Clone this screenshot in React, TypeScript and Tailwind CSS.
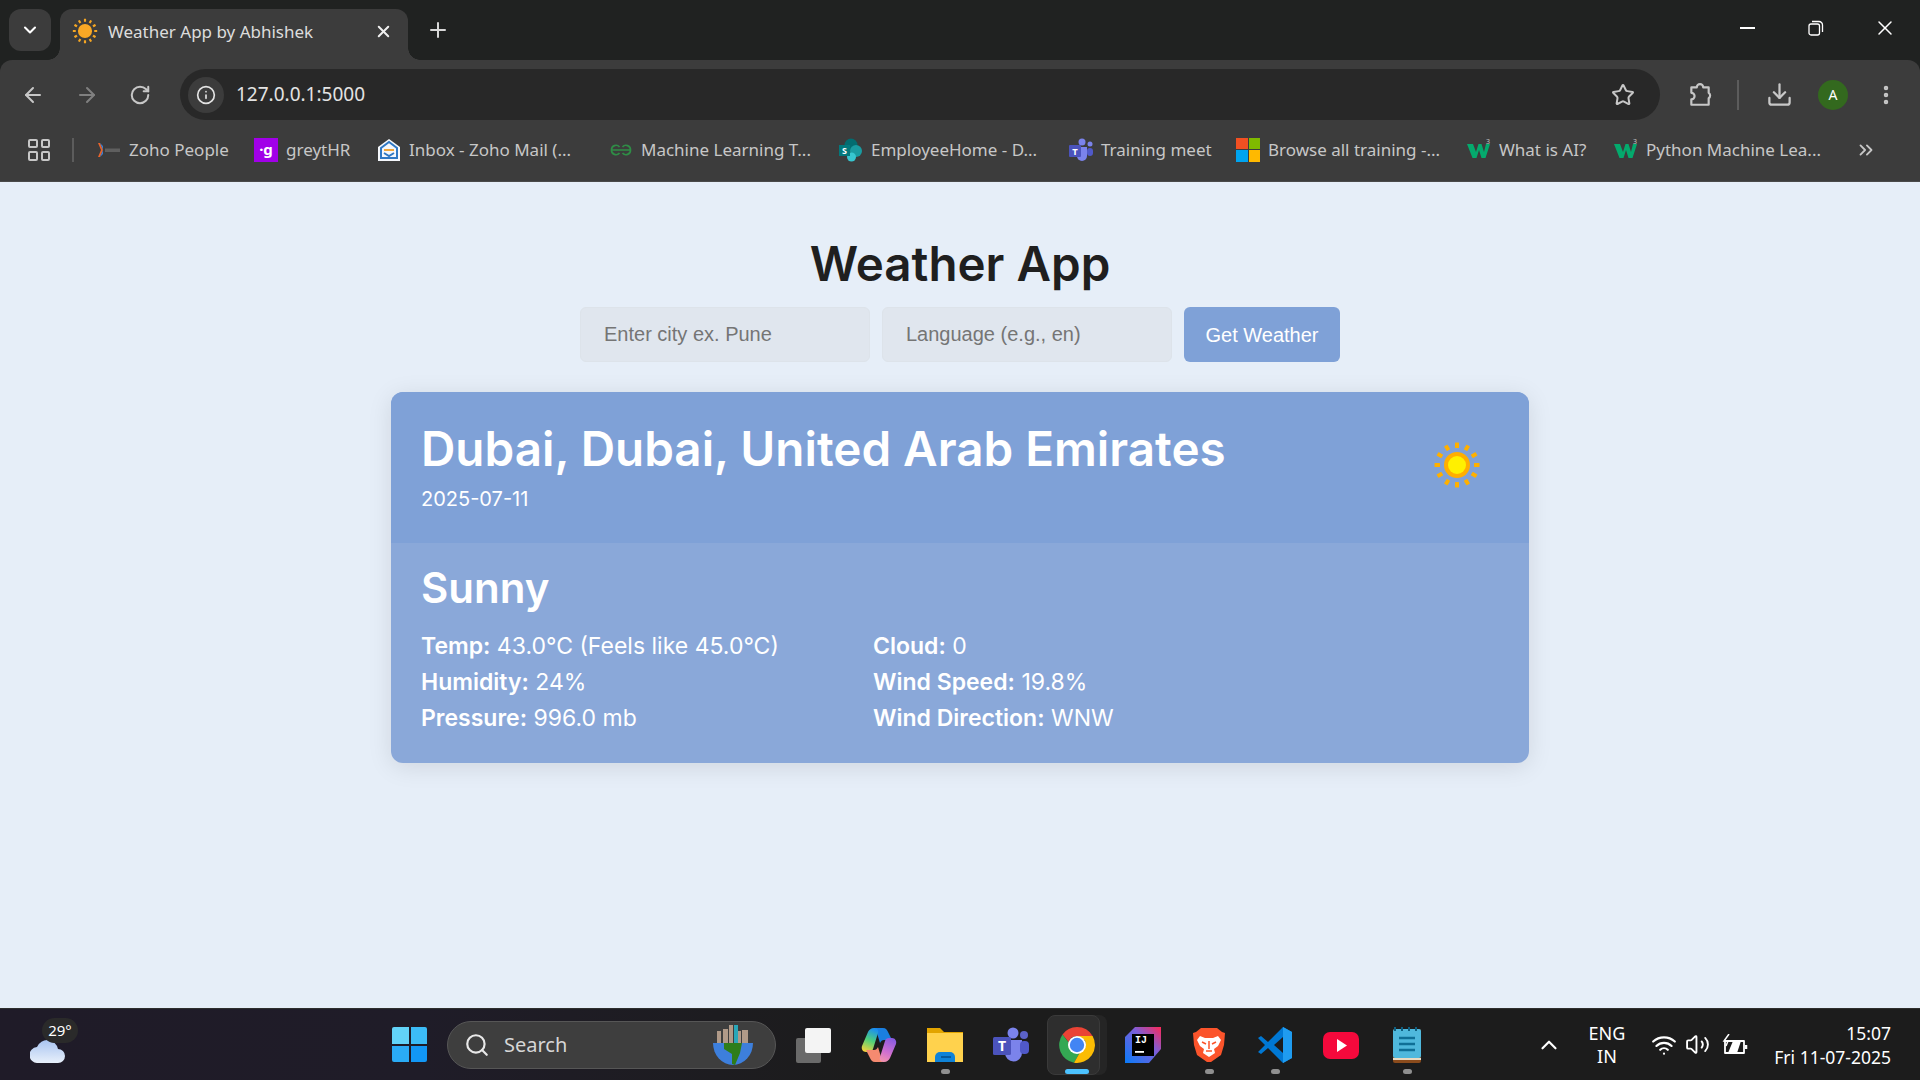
import { ArrowLeft, ArrowRight, ChevronDown, ChevronUp, ChevronsRight, Download, EllipsisVertical, Info, Plus, RotateCw, Search, Star, Volume2, Wifi, X } from "lucide-react";

const SunIcon = ({ className, ray = "#ffb000", disc = "#ffae00", core = "#fff000" }: { className: string; ray?: string; disc?: string; core?: string }) => (
  <svg viewBox="0 0 48 48" className={className}>
    {[0, 30, 60, 90, 120, 150, 180, 210, 240, 270, 300, 330].map((a) => (
      <rect key={a} x="22" y="1.500" width="4" height="5.500" rx="0.500" fill={ray} transform={`rotate(${a} 24 24)`} />
    ))}
    <circle cx="24" cy="24" r="13" fill={disc} />
    <circle cx="24" cy="24" r="9" fill={core} />
  </svg>
);

const W3Icon = () => (
  <svg viewBox="0 0 24 24" className="h-6 w-6">
    <path d="M0 6h6l3 8 2.500-8h3l2.500 8 2-8h4l-4.500 14h-4L12 12l-2.500 8h-4z" fill="#04aa6d" />
    <text x="19" y="6" fontSize="7" fill="#c7c7c7" fontFamily="Noto Sans, sans-serif">3</text>
  </svg>
);

const bookmarks = [
  {
    label: "Zoho People",
    w: "w-[157px]",
    icon: (
      <svg viewBox="0 0 24 24" className="h-6 w-6">
        <path d="M1 5l3 7-3 7h2l3-7-3-7z" fill="#e8642c" />
        <path d="M3 5l3 7-3 7 3-3V8z" fill="#3f7fd0" />
        <rect x="8" y="10.500" width="15" height="3.500" fill="#5f5f5f" />
      </svg>
    ),
  },
  {
    label: "greytHR",
    w: "w-[123px]",
    icon: (
      <div className="flex h-6 w-6 items-center justify-center bg-[#a100e8] text-[15px] leading-none font-bold text-white">·g</div>
    ),
  },
  {
    label: "Inbox - Zoho Mail (...",
    w: "w-[232px]",
    icon: (
      <svg viewBox="0 0 24 24" className="h-6 w-6">
        <path d="M12 1l11 8v14H1V9z" fill="#f4f7fb" />
        <path d="M4 10l8-6 8 6v10H4z" fill="none" stroke="#2f78c4" strokeWidth="2" />
        <path d="M7 11h10v2H7z" fill="#f0a63a" />
        <path d="M7 15l5 3 5-3" fill="none" stroke="#2f78c4" strokeWidth="2" />
      </svg>
    ),
  },
  {
    label: "Machine Learning T...",
    w: "w-[230px]",
    icon: (
      <svg viewBox="0 0 24 24" className="h-6 w-6" fill="none" stroke="#2f8d46" strokeWidth="1.700">
        <path d="M12 12H2.500a4.500 4.500 0 0 1 8-3M12 12h9.500a4.500 4.500 0 0 0-8-3M2.500 12a4.500 4.500 0 0 0 8 3M21.500 12a4.500 4.500 0 0 1-8 3" />
      </svg>
    ),
  },
  {
    label: "EmployeeHome - D...",
    w: "w-[230px]",
    icon: (
      <svg viewBox="0 0 24 24" className="h-6 w-6">
        <circle cx="12" cy="7" r="6.500" fill="#036c70" />
        <circle cx="17" cy="13" r="6" fill="#1a9ba1" />
        <circle cx="12.500" cy="19" r="4.500" fill="#37c6d0" />
        <rect x="0" y="7" width="11" height="11" fill="#03787c" />
        <text x="5.500" y="16" fontSize="9" fontWeight="700" textAnchor="middle" fill="#fff" fontFamily="Noto Sans, sans-serif">S</text>
      </svg>
    ),
  },
  {
    label: "Training meet",
    w: "w-[167px]",
    icon: (
      <svg viewBox="0 0 24 24" className="h-6 w-6">
        <circle cx="21" cy="6" r="2.500" fill="#7b83eb" />
        <circle cx="13" cy="4" r="3.500" fill="#7b83eb" />
        <path d="M8 9h10v9a5 5 0 0 1-10 0z" fill="#7b83eb" />
        <rect x="18" y="10" width="6" height="8" rx="3" fill="#5059c9" />
        <rect x="0" y="7" width="12" height="12" rx="1" fill="#4b53bc" />
        <text x="6" y="16.500" fontSize="9.500" fontWeight="700" textAnchor="middle" fill="#fff" fontFamily="Noto Sans, sans-serif">T</text>
      </svg>
    ),
  },
  {
    label: "Browse all training -...",
    w: "w-[231px]",
    icon: (
      <div className="grid h-6 w-6 grid-cols-2 gap-px">
        <div className="bg-[#f25022]" />
        <div className="bg-[#7fba00]" />
        <div className="bg-[#00a4ef]" />
        <div className="bg-[#ffb900]" />
      </div>
    ),
  },
  { label: "What is AI?", w: "w-[147px]", icon: <W3Icon /> },
  { label: "Python Machine Lea...", w: "w-[216px]", icon: <W3Icon /> },
];

const BrowserChrome = () => (
  <div className="font-['Noto_Sans',sans-serif]">
    {/* tab strip */}
    <div className="flex h-[60px] items-end bg-[#202221] pl-[9px] text-white">
      <div className="mt-[9px] flex h-[42px] w-[42px] items-center justify-center self-start rounded-xl bg-[#3c3c3c]">
        <ChevronDown className="h-5 w-5" strokeWidth={2.500} />
      </div>
      <div className="relative ml-[9px] flex h-[51px] w-[348px] items-center rounded-t-xl bg-[#3c3c3c] pb-[7px] pl-[12px]">
        <span className="absolute bottom-0 -left-3 h-3 w-3 bg-[radial-gradient(circle_at_0_0,transparent_11.500px,#3c3c3c_12px)]" />
        <span className="absolute -right-3 bottom-0 h-3 w-3 bg-[radial-gradient(circle_at_100%_0,transparent_11.500px,#3c3c3c_12px)]" />
        <SunIcon className="h-[26px] w-[26px]" ray="#f5a623" disc="#f9a825" core="#f9a825" />
        <span className="ml-[10px] w-[266px] text-[17px] leading-none text-[#dcdcdc]">Weather App by Abhishek</span>
        <X className="h-[19px] w-[19px] text-[#f0f0f0]" strokeWidth={2.500} />
      </div>
      <Plus className="mb-[18px] ml-[18px] h-[24px] w-[24px] text-[#d8d8d8]" strokeWidth={2} />
      <div className="mb-[20px] ml-auto flex items-center pr-[23px]">
        <div className="h-[2px] w-[15px] bg-white" />
        <svg viewBox="0 0 16 16" className="ml-[53px] h-[16px] w-[16px]" fill="none" stroke="#fff" strokeWidth="1.300">
          <rect x="1" y="4" width="10.500" height="11" rx="2" />
          <path d="M4 1.500h7a3.500 3.500 0 0 1 3.500 3.500v7" />
        </svg>
        <X className="ml-[49px] h-[24px] w-[24px]" strokeWidth={1.500} />
      </div>
    </div>

    {/* toolbar */}
    <div className="bg-[#202221]">
      <div className="rounded-t-xl bg-[#3c3c3c]">
        <div className="flex h-[60px] items-start pt-[9px] text-[#c7c7c7]">
          <div className="flex h-[51px] w-[180px] items-center pl-[21px]">
            <ArrowLeft className="h-6 w-6" strokeWidth={2} />
            <ArrowRight className="ml-[30px] h-6 w-6 text-[#808080]" strokeWidth={2} />
            <RotateCw className="ml-[30px] h-[22px] w-[22px]" strokeWidth={2.200} />
          </div>
          <div className="flex h-[51px] w-[1480px] items-center rounded-full bg-[#282828] pl-[8px]">
            <div className="flex h-[36px] w-[36px] items-center justify-center rounded-full bg-[#3c3c3c]">
              <Info className="h-[20px] w-[20px] text-[#e3e3e3]" strokeWidth={2} />
            </div>
            <span className="ml-[12px] text-[19px] leading-none text-[#e3e3e3]">127.0.0.1:5000</span>
            <Star className="mr-[25px] ml-auto h-[24px] w-[24px]" strokeWidth={2} />
          </div>
          <div className="flex h-[51px] items-center">
            <svg viewBox="0 0 24 24" className="ml-[27px] h-[26px] w-[26px]" fill="none" stroke="#c7c7c7" strokeWidth="2">
              <path d="M4 5h5a3 3 0 0 1 6 0h5v5a3 3 0 0 1 0 5v6H4v-5a3 3 0 0 0 0-6z" strokeLinejoin="round" />
            </svg>
            <div className="ml-[24px] h-[30px] w-[2px] bg-[#5c5c5c]" />
            <Download className="ml-[27px] h-[27px] w-[27px]" strokeWidth={2} />
            <div className="ml-[25px] flex h-[30px] w-[30px] items-center justify-center rounded-full bg-[#33691e] text-[14px] text-white">A</div>
            <EllipsisVertical className="ml-[26px] h-[24px] w-[24px]" strokeWidth={2.500} />
          </div>
        </div>

        {/* bookmarks */}
        <div className="flex h-[62px] items-center border-b border-[#4a4a4a] pb-[2px] text-[17px] leading-none text-[#c7c7c7]">
          <div className="ml-[28px] grid h-[22px] w-[22px] grid-cols-2 gap-[3px]">
            <div className="rounded-[2px] border-2 border-[#c7c7c7]" />
            <div className="rounded-[2px] border-2 border-[#c7c7c7]" />
            <div className="rounded-[2px] border-2 border-[#c7c7c7]" />
            <div className="rounded-[2px] border-2 border-[#c7c7c7]" />
          </div>
          <div className="mr-[23px] ml-[22px] h-[24px] w-[2px] bg-[#5c5c5c]" />
          {bookmarks.map((b) => (
            <div key={b.label} className={`flex shrink-0 items-center gap-[8px] ${b.w}`}>
              {b.icon}
              <span className="whitespace-nowrap">{b.label}</span>
            </div>
          ))}
          <ChevronsRight className="ml-[25px] h-[22px] w-[22px]" strokeWidth={2} />
        </div>
      </div>
    </div>
  </div>
);

const WeatherPage = () => (
  <main className="flex flex-1 flex-col items-center bg-[#e6eef8] pt-[49px] font-['Inter',sans-serif]">
    <h1 className="text-[47.500px] leading-[66px] font-semibold text-[#1f1f1f]">Weather App</h1>
    <form className="mt-[10px] flex gap-[12px] font-['Liberation_Sans',sans-serif]">
      <input
        placeholder="Enter city ex. Pune"
        className="h-[55px] w-[290px] rounded-md border border-[#dde3ea] bg-[#e0e6ee] px-[23px] text-[20px] placeholder:text-[#757575]"
      />
      <input
        placeholder="Language (e.g., en)"
        className="h-[55px] w-[290px] rounded-md border border-[#dde3ea] bg-[#e0e6ee] px-[23px] text-[20px] placeholder:text-[#757575]"
      />
      <button type="button" className="h-[55px] w-[156px] rounded-md bg-[#7fa1d7] text-[20px] text-white">
        Get Weather
      </button>
    </form>

    <section className="mt-[30px] w-[1138px] overflow-hidden rounded-xl bg-[#8aa8d9] text-white shadow-[0_4px_24px_rgba(0,0,0,0.1)]">
      <div className="flex items-center justify-between bg-[#7fa1d7] pt-[29px] pr-[48px] pb-[30px] pl-[30px]">
        <div>
          <h2 className="text-[47.600px] leading-[56px] font-semibold">Dubai, Dubai, United Arab Emirates</h2>
          <p className="mt-[9px] text-[20px] leading-[27px]">2025-07-11</p>
        </div>
        <SunIcon className="mb-[4px] h-[48px] w-[48px]" />
      </div>
      <div className="pt-[21px] pr-[30px] pb-[27px] pl-[30px]">
        <h3 className="text-[42px] leading-[48px] font-semibold">Sunny</h3>
        <div className="mt-[16px] grid grid-cols-[452px_1fr] text-[23px] leading-[36px]">
          <p><b className="font-semibold">Temp:</b> 43.0°C (Feels like 45.0°C)</p>
          <p><b className="font-semibold">Cloud:</b> 0</p>
          <p><b className="font-semibold">Humidity:</b> 24%</p>
          <p><b className="font-semibold">Wind Speed:</b> 19.8%</p>
          <p><b className="font-semibold">Pressure:</b> 996.0 mb</p>
          <p><b className="font-semibold">Wind Direction:</b> WNW</p>
        </div>
      </div>
    </section>
  </main>
);

const apps = [
  {
    name: "taskview",
    icon: (
      <svg viewBox="0 0 36 36" className="h-9 w-9">
        <rect x="1" y="11" width="25" height="25" rx="2" fill="#6a6a6a" />
        <rect x="10" y="1" width="26" height="25" rx="2" fill="#f4f4f4" />
      </svg>
    ),
  },
  {
    name: "copilot",
    icon: (
      <svg viewBox="0 0 36 36" className="h-9 w-9">
        <defs>
          <linearGradient id="cp1" x1="0.600" y1="0" x2="0.300" y2="1">
            <stop offset="0" stopColor="#1b8ff0" />
            <stop offset="0.5" stopColor="#4fd07a" />
            <stop offset="1" stopColor="#f2d23c" />
          </linearGradient>
          <linearGradient id="cp2" x1="0.400" y1="1" x2="0.700" y2="0">
            <stop offset="0" stopColor="#8a5be0" />
            <stop offset="0.6" stopColor="#d070d0" />
            <stop offset="1" stopColor="#f090b0" />
          </linearGradient>
        </defs>
        <path d="M13 1h9c3 0 4 2 5 4l4 8h-8c-2 0-3 1-4 3l-3-10c0-3-1-5-3-5z" fill="#1a7fe0" />
        <path d="M13 1c3 0 5 2 4 5L12 22c-.5 2-2 3-4 3H5c-3 0-5-3-4-6L7 5c1-2 3-4 6-4z" fill="url(#cp1)" />
        <path d="M13 1h9c3 0 4 2 5 4l4 8h-8c-2 0-3 1-4 3l-3-10c0-3-1-5-3-5z" fill="#f58a70" transform="rotate(180 18 18)" />
        <path d="M13 1c3 0 5 2 4 5L12 22c-.5 2-2 3-4 3H5c-3 0-5-3-4-6L7 5c1-2 3-4 6-4z" fill="url(#cp2)" transform="rotate(180 18 18)" />
      </svg>
    ),
    dot: false,
  },
  {
    name: "explorer",
    icon: (
      <svg viewBox="0 0 36 36" className="h-9 w-9">
        <path d="M0 1h13l4 4h19v30H0z" fill="#e2a400" />
        <path d="M0 6h36v29H0z" fill="#ffd24d" />
        <path d="M11 30a5 5 0 0 1 5-5h10a5 5 0 0 1 5 5v5H11z" fill="#0f83d8" transform="translate(-3)" />
        <rect x="14" y="29" width="10" height="2" fill="#075a9c" />
      </svg>
    ),
    dot: true,
  },
  {
    name: "teams",
    icon: (
      <svg viewBox="0 0 36 36" className="h-9 w-9">
        <circle cx="31" cy="8" r="4" fill="#5b62c8" />
        <circle cx="20" cy="6" r="5.500" fill="#7b83eb" />
        <path d="M12 13h17v13a8.500 8.500 0 0 1-17 0z" fill="#7b83eb" />
        <rect x="27" y="14" width="9" height="13" rx="4" fill="#5059c9" />
        <rect x="0" y="10" width="18" height="18" rx="1.500" fill="#4b53bc" />
        <text x="9" y="24" fontSize="14" fontWeight="700" textAnchor="middle" fill="#fff" fontFamily="Noto Sans, sans-serif">T</text>
      </svg>
    ),
  },
  {
    name: "chrome",
    active: true,
    icon: (
      <svg viewBox="0 0 36 36" className="relative h-9 w-9">
        <path d="M18 0a18 18 0 0 1 15.600 9H18a9 9 0 0 0-8.500 6L3.500 7.500A18 18 0 0 1 18 0z" fill="#ea4335" />
        <path d="M3.500 7.500A18 18 0 0 0 15 35.700l6-10.500a9 9 0 0 1-11.500-10z" fill="#34a853" />
        <path d="M33.600 9A18 18 0 0 1 15 35.700l6-10.500A9 9 0 0 0 26 13.500L18 9z" fill="#fbbc04" />
        <circle cx="18" cy="18" r="9" fill="#fff" />
        <circle cx="18" cy="18" r="7.200" fill="#4285f4" />
      </svg>
    ),
  },
  {
    name: "idea",
    icon: (
      <div className="relative h-9 w-9">
        <svg viewBox="0 0 36 36" className="absolute inset-0 h-9 w-9">
          <defs>
            <linearGradient id="ij" x1="0" y1="1" x2="1" y2="0">
              <stop offset="0" stopColor="#087cfa" />
              <stop offset="0.6" stopColor="#7d5ed8" />
              <stop offset="1" stopColor="#fe2857" />
            </linearGradient>
          </defs>
          <path d="M10 0h26v22L24 36H0V10z" fill="url(#ij)" />
          <rect x="7" y="7" width="22" height="22" fill="#000" />
          <rect x="10" y="24" width="9" height="1.800" fill="#fff" />
        </svg>
        <span className="absolute top-[9px] left-[10px] font-['Liberation_Mono',monospace] text-[10px] leading-none font-bold text-white">IJ</span>
      </div>
    ),
  },
  {
    name: "brave",
    icon: (
      <svg viewBox="0 0 36 36" className="h-9 w-9">
        <path d="M10 1h16l5 4 3 1-1 12-3 10-10 7h-4L6 28 3 18 2 6l3-1z" fill="#fb542b" />
        <path d="M9 9l5 2h8l5-2 3 4-3 6-4 3 1 4-6 4-6-4 1-4-4-3-3-6z" fill="#fff" />
        <path d="M11 15l4 2M25 15l-4 2M18 14v8M15 24h6" stroke="#fb542b" strokeWidth="1.500" fill="none" />
      </svg>
    ),
    dot: true,
  },
  {
    name: "vscode",
    icon: (
      <svg viewBox="0 0 36 36" className="h-9 w-9">
        <path d="M26 0l9 5v26l-9 5-15-15-7 6-3-2 7-7-7-7 3-2 7 6z" fill="#0078d4" />
        <path d="M26 0l9 5v26l-9 5z" fill="#1f9cf0" />
        <path d="M26 10l-9 8 9 8z" fill="#1c1c1c" />
      </svg>
    ),
    dot: true,
  },
  {
    name: "youtube",
    icon: (
      <svg viewBox="0 0 36 36" className="h-9 w-9">
        <rect x="0" y="5" width="36" height="27" rx="7" fill="#f5093c" />
        <path d="M14 12l10 6.500-10 6.500z" fill="#fff" />
      </svg>
    ),
  },
  {
    name: "notepad",
    icon: (
      <svg viewBox="0 0 36 36" className="h-9 w-9">
        <rect x="4" y="2" width="28" height="34" rx="2" fill="#8a4b1c" />
        <rect x="4" y="2" width="28" height="29" rx="2" fill="#4fb8dc" />
        <rect x="4" y="31" width="28" height="2" fill="#e8d9c0" />
        <path d="M6 0v4M13 0v4M20 0v4M27 0v4" stroke="#0f5f80" strokeWidth="2" />
        <path d="M10 11h16M10 17h16M10 23h16" stroke="#0f6f96" strokeWidth="2.500" />
      </svg>
    ),
    dot: true,
  },
];

const Taskbar = () => (
  <footer className="flex h-[72px] items-center border-t border-[#2e2e2e] bg-[linear-gradient(90deg,#1f1b28_0%,#1f1c28_22%,#1c1c1c_45%)] font-['Noto_Sans',sans-serif] text-white">
    {/* weather widget */}
    <div className="relative h-full w-[392px] shrink-0">
      <svg viewBox="0 0 36 24" className="absolute top-[30px] left-[30px] h-[24px] w-[36px]">
        <defs>
          <linearGradient id="cl" x1="0" y1="0" x2="0" y2="1">
            <stop offset="0" stopColor="#a9c4f0" />
            <stop offset="1" stopColor="#e8f0fb" />
          </linearGradient>
        </defs>
        <path d="M8 24a8 8 0 0 1-1-16 11 11 0 0 1 21 2 7 7 0 0 1 0 14z" fill="url(#cl)" />
      </svg>
      <div className="absolute top-[9px] left-[42px] flex h-[25px] w-[36px] items-center justify-center rounded-full bg-[#2a2a2a] text-[15px] leading-none">29°</div>
    </div>
    <div className="grid h-[35px] w-[35px] shrink-0 grid-cols-2 gap-[2px]">
      <div className="rounded-tl-[2px] bg-[#62d3f8]" />
      <div className="rounded-tr-[2px] bg-[#3cbcf7]" />
      <div className="rounded-bl-[2px] bg-[#2aabf5]" />
      <div className="rounded-br-[2px] bg-[#1297f5]" />
    </div>
    <div className="ml-[20px] flex h-[48px] w-[329px] shrink-0 items-center rounded-full border border-[#565656] bg-[#3e3e3e] pl-[16px]">
      <Search className="h-[26px] w-[26px] text-[#e8e8e8]" strokeWidth={2} />
      <span className="ml-[14px] text-[20px] leading-none text-[#d6d6d6]">Search</span>
      <svg viewBox="0 0 44 44" className="mr-[20px] ml-auto h-[44px] w-[44px]">
        <path d="M6 8h4v15H6zM12 6h5v17h-5zM18 2h4v21h-4zM27 8h3v15h-3zM31 7h6v16h-6z" fill="#b09a88" />
        <rect x="23" y="2" width="4" height="21" fill="#2aa7b8" />
        <path d="M2 20h40a20 22 0 0 1-40 0z" fill="#3d7fdc" />
        <path d="M13 20h18l-2 10-5 12-3-1v-10l-8-5z" fill="#2e7d1a" />
      </svg>
    </div>
    <div className="ml-[4px] flex shrink-0">
      {apps.map((a) => (
        <div key={a.name} className="relative flex h-[60px] w-[66px] items-center justify-center">
          {a.active && (
            <>
              <span className="absolute top-0 right-[3px] bottom-0 w-[56px] rounded-lg bg-[#252525]" />
              <span className="absolute top-0 right-[10px] bottom-0 left-[3px] rounded-lg border border-[#3a3a3a] bg-[#2e2e2e]" />
              <span className="absolute bottom-[1px] left-[21px] h-[5px] w-[24px] rounded-full bg-[#4cc2ff]" />
            </>
          )}
          {a.icon}
          {a.dot && <span className="absolute bottom-[1px] h-[5px] w-[9px] rounded-full bg-[#8f8f8f]" />}
        </div>
      ))}
    </div>
    <ChevronUp className="ml-[96px] h-[26px] w-[26px] shrink-0" strokeWidth={2} />
    <div className="ml-[20px] w-[50px] text-center text-[18px] leading-[23px]">
      <div>ENG</div>
      <div>IN</div>
    </div>
    <Wifi className="ml-[19px] h-[26px] w-[26px]" strokeWidth={2} />
    <Volume2 className="ml-[8px] h-[25px] w-[25px]" strokeWidth={1.800} />
    <svg viewBox="0 0 26 22" className="ml-[12px] h-[22px] w-[26px]" fill="none" stroke="#fff" strokeWidth="1.800">
      <path d="M3 7h19v12H3z" strokeLinejoin="round" />
      <path d="M24 11v4" strokeWidth="2.500" />
      <path d="M6 19l5-12h8l-4 12z" fill="#fff" stroke="none" />
      <path d="M7 0L2 7h4l-2 5" strokeWidth="1.500" />
    </svg>
    <div className="ml-auto pr-[29px] text-right text-[17.500px] leading-[24px]">
      <div>15:07</div>
      <div>Fri 11-07-2025</div>
    </div>
  </footer>
);

export default function App() {
  return (
    <div className="flex h-screen flex-col overflow-hidden">
      <BrowserChrome />
      <WeatherPage />
      <Taskbar />
    </div>
  );
}
